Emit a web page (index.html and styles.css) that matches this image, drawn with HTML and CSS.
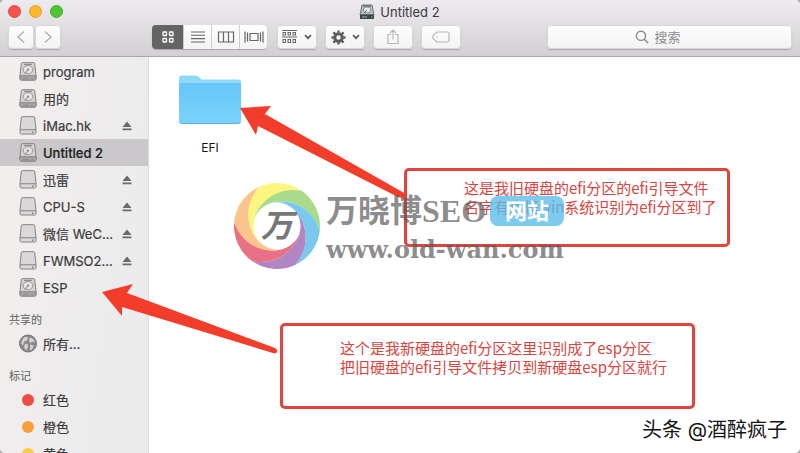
FILE: index.html
```html
<!DOCTYPE html>
<html lang="zh-CN">
<head>
<meta charset="utf-8">
<title>Untitled 2</title>
<link rel="stylesheet" href="styles.css">
</head>
<body>
<svg class="defs" aria-hidden="true">
  <symbol id="disk" viewBox="0 0 18 20" preserveAspectRatio="none">
    <path d="M3.500 .7h11q1 0 1.200 1L17 14v3.500q0 1.500-1.500 1.500h-13Q1 19 1 17.500V14l1.300-12.300q.2-1 1.200-1z" fill="#d2d0d1" stroke="#828082"/>
    <path d="M1 14.500h16v3q0 1.500-1.500 1.500h-13Q1 19 1 17.500z" fill="#aaa8aa" stroke="#828082"/>
    <ellipse cx="9" cy="8" rx="4.800" ry="4.300" fill="#e4e2e3" stroke="#9b999b"/>
    <circle cx="9" cy="8" r="1.200" fill="#8f8d8f"/>
    <path d="M5 2.500h8M9 8l-3 4.500M4 17h6M12 17h2" stroke="#848284" fill="none"/>
  </symbol>
  <symbol id="drive" viewBox="0 0 18 20" preserveAspectRatio="none">
    <path d="M3.500 .7h11q1 0 1.200 1L17 14v3.500q0 1.500-1.500 1.500h-13Q1 19 1 17.500V14l1.300-12.300q.2-1 1.200-1z" fill="#d9d7d8" stroke="#828082"/>
    <path d="M1 14.500h16" stroke="#828082"/>
    <path d="M13 17h1.500" stroke="#555"/>
  </symbol>
  <symbol id="eject" viewBox="0 0 10 10">
    <path d="M5 .5L9.500 6h-9zM.5 7.500h9v1.700h-9z" fill="#6b696b"/>
  </symbol>
  <symbol id="chevron" viewBox="0 0 8 6">
    <path d="M1 1.200l3 3 3-3" fill="none" stroke="#5c5c5c" stroke-width="1.700"/>
  </symbol>
</svg>

<div class="window">
  <header class="header">
    <div class="titlebar">
      <div class="lights">
        <button class="light light-close" aria-label="关闭"></button>
        <button class="light light-min" aria-label="最小化"></button>
        <button class="light light-zoom" aria-label="缩放"></button>
      </div>
      <h1 class="title">
        <svg width="16" height="16" viewBox="0 0 16 16" aria-hidden="true">
          <path d="M3 1h10l2 10H1z" fill="#b5bdbd" stroke="#707878"/>
          <path d="M1 10.500h14V15H1z" fill="#3d4648"/>
          <ellipse cx="8" cy="6" rx="3.800" ry="3" fill="#e4eded" stroke="#8b9797"/>
          <path d="M4 2h8" stroke="#4d5759"/><path d="M8 6l-3 3" stroke="#626e6e"/>
          <path d="M3 13h5" stroke="#a9b4b4"/><path d="M12 13h1.500" stroke="#8fd06a"/>
        </svg>
        Untitled 2
      </h1>
    </div>
    <div class="toolbar">
      <div class="nav">
        <button class="btn nav-btn" aria-label="后退"><svg width="10" height="14" viewBox="0 0 10 14"><path d="M8 1.500L2 7l6 5.500" fill="none" stroke="#b4b3b4" stroke-width="1.500"/></svg></button>
        <button class="btn nav-btn" aria-label="前进"><svg width="10" height="14" viewBox="0 0 10 14"><path d="M2 1.500L8 7l-6 5.500" fill="none" stroke="#b4b3b4" stroke-width="1.500"/></svg></button>
      </div>
      <div class="views">
        <button class="view view-active" aria-label="图标"><svg width="12" height="12" viewBox="0 0 12 12" fill="none" stroke="#fff" stroke-width="1.300"><rect x="1" y="1" width="3.500" height="3.500" rx=".5"/><rect x="7.500" y="1" width="3.500" height="3.500" rx=".5"/><rect x="1" y="7.500" width="3.500" height="3.500" rx=".5"/><rect x="7.500" y="7.500" width="3.500" height="3.500" rx=".5"/></svg></button>
        <button class="view" aria-label="列表"><svg width="16" height="12" viewBox="0 0 16 12"><path d="M1 1h14M1 4.300h14M1 7.600h14M1 11h14" stroke="#666" stroke-width="1.100"/></svg></button>
        <button class="view" aria-label="分栏"><svg width="18" height="12" viewBox="0 0 18 12"><path d="M1.500 1h15v10h-15zM6.500 1v10M11.500 1v10" fill="none" stroke="#666" stroke-width="1.200"/></svg></button>
        <button class="view" aria-label="封面流"><svg width="20" height="12" viewBox="0 0 20 12"><path d="M1 .5v11M3.500 1.500v9M6 2.500h8v7H6zM16.500 1.500v9M19 .5v11" fill="none" stroke="#666" stroke-width="1.200"/></svg></button>
      </div>
      <button class="btn tool" aria-label="排列">
        <svg width="16" height="14" viewBox="0 0 16 14" fill="none" stroke="#666"><path d="M0 .5h15M0 7h15"/><rect x="1" y="2.500" width="2.500" height="2.500"/><rect x="6" y="2.500" width="2.500" height="2.500"/><rect x="11" y="2.500" width="2.500" height="2.500"/><rect x="1" y="9.500" width="2.500" height="3"/><rect x="6" y="9.500" width="2.500" height="3"/><rect x="11" y="9.500" width="2.500" height="3"/></svg>
        <svg class="chevron" width="8" height="6"><use href="#chevron"/></svg>
      </button>
      <button class="btn tool" aria-label="操作">
        <svg width="15" height="15" viewBox="-8 -8 16 16"><circle r="4" fill="none" stroke="#5c5c5c" stroke-width="3.200"/><path d="M0-5v-2.500M0 5v2.500M-5 0h-2.500M5 0h2.500M3.500-3.500l1.900-1.900M-3.500-3.500l-1.900-1.900M3.500 3.500l1.900 1.900M-3.500 3.500l-1.900 1.900" stroke="#5c5c5c" stroke-width="2.600"/></svg>
        <svg class="chevron" width="8" height="6"><use href="#chevron"/></svg>
      </button>
      <button class="btn tool" aria-label="共享"><svg width="14" height="16" viewBox="0 0 14 16"><path d="M5 5.500H2v9h10v-9H9M7 10.500V1.500M4 4l3-3 3 3" fill="none" stroke="#b9b8b9" stroke-width="1.200"/></svg></button>
      <button class="btn tool" aria-label="标记"><svg width="18" height="12" viewBox="0 0 18 12"><path d="M5 1h10.500q1.500 0 1.500 1.500v7q0 1.500-1.500 1.500H5L1 7.500v-3z" fill="none" stroke="#b9b8b9" stroke-width="1.200"/><circle cx="4.800" cy="6" r=".8" fill="#b9b8b9"/></svg></button>
      <label class="search">
        <svg width="14" height="14" viewBox="0 0 14 14"><circle cx="6" cy="5.800" r="4.600" fill="none" stroke="#8b8b8b" stroke-width="1.400"/><path d="M9.300 9.300L13 13" stroke="#8b8b8b" stroke-width="1.600"/></svg>
        <input class="search-input" type="text" placeholder="搜索" aria-label="搜索">
      </label>
    </div>
  </header>

  <div class="body">
    <nav class="sidebar">
      <a class="row" href="#"><svg class="icon"><use href="#disk"/></svg><span class="name">program</span></a>
      <a class="row" href="#"><svg class="icon"><use href="#disk"/></svg><span class="name">用的</span></a>
      <a class="row" href="#"><svg class="icon"><use href="#drive"/></svg><span class="name">iMac.hk</span><svg class="eject"><use href="#eject"/></svg></a>
      <a class="row row-selected" href="#"><svg class="icon"><use href="#disk"/></svg><span class="name">Untitled 2</span></a>
      <a class="row" href="#"><svg class="icon"><use href="#drive"/></svg><span class="name">迅雷</span><svg class="eject"><use href="#eject"/></svg></a>
      <a class="row" href="#"><svg class="icon"><use href="#drive"/></svg><span class="name">CPU-S</span><svg class="eject"><use href="#eject"/></svg></a>
      <a class="row" href="#"><svg class="icon"><use href="#drive"/></svg><span class="name">微信 WeC...</span><svg class="eject"><use href="#eject"/></svg></a>
      <a class="row" href="#"><svg class="icon"><use href="#drive"/></svg><span class="name">FWMSO2...</span><svg class="eject"><use href="#eject"/></svg></a>
      <a class="row" href="#"><svg class="icon"><use href="#disk"/></svg><span class="name">ESP</span></a>
      <h2 class="section">共享的</h2>
      <a class="row" href="#"><svg class="icon" viewBox="0 0 18 18"><circle cx="9" cy="9" r="8.500" fill="#8a888a" stroke="#777577"/><path d="M4 4q3-3 5-1l-1 3-3 1-1 4-2-2zM11 3q4 1 5 5l-3-1-2 2-1-3zM6 9l3 1v3l-2 3-2-3zM11 10l4 1-2 4-2 1z" fill="#d3d1d2"/></svg><span class="name">所有...</span></a>
      <h2 class="section">标记</h2>
      <a class="row" href="#"><span class="tag tag-red"></span><span class="name">红色</span></a>
      <a class="row" href="#"><span class="tag tag-orange"></span><span class="name">橙色</span></a>
      <a class="row" href="#"><span class="tag tag-yellow"></span><span class="name">黄色</span></a>
    </nav>
    <main class="files">
      <figure class="file">
        <svg width="64" height="52" viewBox="0 0 64 52" aria-hidden="true">
          <defs><linearGradient id="folder" x1="0" y1="0" x2="0" y2="1"><stop offset="0" stop-color="#66c6f8"/><stop offset="1" stop-color="#7ad2fb"/></linearGradient></defs>
          <path d="M1 4q0-2.500 2.500-2.500h14q2 0 3.500 1.500l2.500 2.500H60q3 0 3 3V20H1z" fill="#8ed8f8"/>
          <path d="M1 11q0-2 2-2h58q2 0 2 2v36q0 2.500-2.500 2.500h-57Q1 49.500 1 47z" fill="url(#folder)"/>
          <path d="M1.500 48q.5 1.500 2 1.500h57q1.500 0 2-1.500" fill="none" stroke="#5fb2dc"/>
        </svg>
        <figcaption class="file-name">EFI</figcaption>
      </figure>
    </main>
  </div>
</div>

<svg class="arrows" viewBox="0 0 800 453" aria-hidden="true">
  <path d="M240 108l31-2-6 8 141 80v5l-8-2-140-71-2 9z" fill="#f23d2a"/>
  <path d="M102 292l31-8-6 9 148 55q3 2 2 4t-4 1l-151-46v9z" fill="#f23d2a"/>
</svg>
<p class="note note-old">这是我旧硬盘的efi分区的efi引导文件<br>名字有点怪win系统识别为efi分区到了</p>
<p class="note note-new">这个是我新硬盘的efi分区这里识别成了esp分区<br>把旧硬盘的efi引导文件拷贝到新硬盘esp分区就行</p>

<div class="watermark">
  <svg class="swirl" viewBox="-44 -44 88 88">
    <defs><path id="petal" d="M-15.100-18C-1-30 30-28 43 0A43 43 0 0 1 21.500 37.200C39.200 12 25.500-15.900 8-22.100A23.500 23.500 0 0 0-15.100-18z"/></defs>
    <circle r="24" fill="#fff"/>
    <use href="#petal" transform="rotate(-115)" fill="#fbf67e"/>
    <use href="#petal" transform="rotate(-55)" fill="#a9db8b"/>
    <use href="#petal" transform="rotate(5)" fill="#79c9ef"/>
    <use href="#petal" transform="rotate(65)" fill="#b186c3"/>
    <use href="#petal" transform="rotate(125)" fill="#e77286"/>
    <use href="#petal" transform="rotate(185)" fill="#f9c58c"/>
    <text class="swirl-text" y="11" text-anchor="middle">万</text>
  </svg>
  <div class="brand">
    <div class="brand-top"><span class="brand-name">万晓博SEO</span><span class="brand-badge">网站</span></div>
    <div class="brand-url">www.old-wan.com</div>
  </div>
</div>
<div class="credit">头条 @酒醉疯子</div>
</body>
</html>
```
FILE: styles.css
```css
* { box-sizing: border-box; }

body {
  margin: 0;
  height: 100vh;
  position: relative;
  overflow: hidden;
  background: #a9a8aa;
  font-family: Inter, "Noto Sans CJK SC", sans-serif;
  font-size: 13px;
  color: #3c3a3c;
}

button, input { font: inherit; }

.defs { position: absolute; width: 0; height: 0; }

.window {
  display: flex;
  flex-direction: column;
  height: 100vh;
  border-radius: 5px;
  overflow: hidden;
  background: #fff;
}

.header {
  flex: none;
  padding-bottom: 7px;
  background: linear-gradient(#edebed, #d3d0d4);
  border-bottom: 1px solid #a9a6a9;
}

.titlebar {
  display: grid;
  grid-template-columns: 1fr auto 1fr;
  align-items: center;
  height: 25px;
  padding: 0 9px 2px 8px;
}

.lights { display: flex; gap: 8px; }

.light {
  width: 13px;
  height: 13px;
  padding: 0;
  border: 1px solid;
  border-radius: 50%;
}
.light-close { background: #f4544d; border-color: #dc4b45; }
.light-min { background: #fdb72e; border-color: #dfa02c; }
.light-zoom { background: #50c439; border-color: #43aa30; }

.title {
  display: flex;
  align-items: center;
  gap: 5px;
  margin: 0;
  font-size: 13px;
  font-weight: 400;
}

.toolbar {
  display: flex;
  gap: 8px;
  height: 24px;
  padding: 0 8px;
}

.btn, .view, .search {
  display: flex;
  align-items: center;
  justify-content: center;
  padding: 0;
  border: 0;
  background: linear-gradient(#fefefe, #f4f3f4);
}

.btn, .views, .search {
  border-radius: 4px;
  box-shadow: 0 0 0 1px #d9d6d9 inset, 0 1px 1px #aaa7aa;
}

.nav { display: flex; gap: 1px; margin-right: 83px; }
.nav-btn { width: 26px; }

.views {
  display: flex;
  gap: 1px;
  margin-right: 2px;
  background: #cfcccf;
  overflow: hidden;
}
.view { width: 27px; }
.view-active { width: 31px; background: #656465; }

.tool { width: 40px; gap: 6px; }
.chevron { flex: none; }

.search {
  flex: 1;
  gap: 6px;
  margin-left: 78px;
}
.search-input {
  width: 50px;
  padding: 0;
  border: 0;
  outline: 0;
  background: none;
}
.search-input::placeholder { color: #8b8b8b; opacity: 1; }

.body { display: flex; flex: 1; min-height: 0; }

.sidebar {
  flex: none;
  width: 149px;
  padding-top: 1px;
  overflow: hidden;
  background: linear-gradient(100deg, #f2eeed, #ebebed);
  border-right: 1px solid #dad8da;
}

.row {
  display: flex;
  align-items: center;
  gap: 6px;
  height: 27px;
  padding: 0 16px 0 19px;
  color: inherit;
  text-decoration: none;
  white-space: nowrap;
  -webkit-text-stroke: 0.2px;
}
.row-selected { background: #cac8ca; color: #222; font-weight: 500; }

.icon { flex: none; width: 18px; height: 19px; }
.name { flex: 1; }
.eject { flex: none; width: 10px; height: 10px; }

.section {
  height: 29px;
  margin: 0;
  padding: 9px 0 0 9px;
  font-size: 11px;
  line-height: 20px;
  font-weight: 500;
  color: #777577;
}

.tag { width: 12px; height: 12px; margin: 0 3px; border-radius: 50%; }
.tag-red { background: #f14a45; }
.tag-orange { background: #f79f3b; }
.tag-yellow { background: #f3cd44; }

.files { flex: 1; padding: 17px 29px; }

.file {
  display: flex;
  flex-direction: column;
  align-items: center;
  gap: 14px;
  width: 64px;
  margin: 0;
}
.file-name { font-size: 12px; line-height: 16px; color: #111; }

.arrows { position: absolute; top: 0; left: 0; width: 800px; height: 453px; pointer-events: none; }

.note {
  position: absolute;
  margin: 0;
  border: 3px solid #e0453b;
  border-radius: 5px;
  color: #d8453e;
  font-family: "Noto Sans CJK SC", sans-serif;
  font-size: 15px;
  line-height: 19px;
  white-space: nowrap;
}
.note-old { left: 404px; top: 168px; width: 326px; height: 79px; padding: 7px 0 0 57px; }
.note-new { left: 280px; top: 323px; width: 415px; height: 86px; padding: 12px 0 0 57px; }

.watermark {
  position: absolute;
  left: 233px;
  top: 182px;
  display: flex;
  gap: 5px;
  color: rgba(90, 90, 90, 0.7);
}
.swirl { width: 88px; height: 88px; }
.swirl-text {
  font-family: "Noto Sans CJK SC", sans-serif;
  font-size: 32px;
  font-style: italic;
  font-weight: 700;
  fill: #777;
}

.brand-top { display: flex; align-items: center; gap: 4px; height: 58px; }
.brand-name {
  font-family: "Liberation Serif", "Noto Sans CJK SC", serif;
  font-size: 32px;
  line-height: 40px;
  font-weight: 700;
}
.brand-badge {
  padding: 0 15px;
  border-radius: 8px;
  background: rgba(88, 190, 236, 0.78);
  color: #fff;
  font-size: 22px;
  line-height: 30px;
  font-weight: 700;
}
.brand-url {
  font-family: "DejaVu Serif", serif;
  font-size: 24px;
  line-height: 20px;
  font-weight: 700;
}

.credit {
  position: absolute;
  right: 13px;
  bottom: 9px;
  font-size: 20px;
  line-height: 28px;
  color: #151515;
  text-shadow: 1px 1px 0 #fff;
}
```
